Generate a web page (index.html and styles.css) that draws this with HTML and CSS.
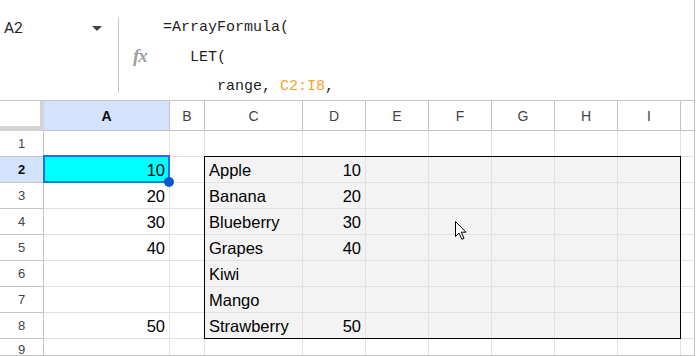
FILE: index.html
```html
<!DOCTYPE html>
<html lang="en">
<head>
  <meta charset="UTF-8">
  <title>Sheet</title>
  <link rel="stylesheet" href="styles.css">
</head>
<body>

<div class="app">
  <!-- formula bar -->
  <div class="fbar">
    <div class="namebox"><span>A2</span><span class="caret"></span></div>
    <div class="divider"></div>
    <div class="fx">fx</div>
<pre class="formula">=ArrayFormula(
   LET(
      range, <span class="ref">C2:I8</span>,</pre>
  </div>

  <!-- grid -->
  <div class="sheet">
    <div class="corner"></div>
    <div class="hd sel">A</div><div class="hd">B</div><div class="hd">C</div><div class="hd">D</div><div class="hd">E</div><div class="hd">F</div><div class="hd">G</div><div class="hd">H</div><div class="hd">I</div><div class="hd last"></div>

    <div class="rh">1</div>
    <div class="c"></div><div class="c"></div><div class="c"></div><div class="c"></div><div class="c"></div><div class="c"></div><div class="c"></div><div class="c"></div><div class="c"></div><div class="c last"></div>

    <div class="rh sel">2</div>
    <div class="c num cyan">10</div><div class="c"></div><div class="c g">Apple</div><div class="c g num">10</div><div class="c g"></div><div class="c g"></div><div class="c g"></div><div class="c g"></div><div class="c g"></div><div class="c last"></div>

    <div class="rh">3</div>
    <div class="c num">20</div><div class="c"></div><div class="c g">Banana</div><div class="c g num">20</div><div class="c g"></div><div class="c g"></div><div class="c g"></div><div class="c g"></div><div class="c g"></div><div class="c last"></div>

    <div class="rh">4</div>
    <div class="c num">30</div><div class="c"></div><div class="c g">Blueberry</div><div class="c g num">30</div><div class="c g"></div><div class="c g"></div><div class="c g"></div><div class="c g"></div><div class="c g"></div><div class="c last"></div>

    <div class="rh">5</div>
    <div class="c num">40</div><div class="c"></div><div class="c g">Grapes</div><div class="c g num">40</div><div class="c g"></div><div class="c g"></div><div class="c g"></div><div class="c g"></div><div class="c g"></div><div class="c last"></div>

    <div class="rh">6</div>
    <div class="c"></div><div class="c"></div><div class="c g">Kiwi</div><div class="c g"></div><div class="c g"></div><div class="c g"></div><div class="c g"></div><div class="c g"></div><div class="c g"></div><div class="c last"></div>

    <div class="rh">7</div>
    <div class="c"></div><div class="c"></div><div class="c g">Mango</div><div class="c g"></div><div class="c g"></div><div class="c g"></div><div class="c g"></div><div class="c g"></div><div class="c g"></div><div class="c last"></div>

    <div class="rh">8</div>
    <div class="c num">50</div><div class="c"></div><div class="c g">Strawberry</div><div class="c g num">50</div><div class="c g"></div><div class="c g"></div><div class="c g"></div><div class="c g"></div><div class="c g"></div><div class="c last"></div>

    <div class="rh r9">9</div>
    <div class="c"></div><div class="c"></div><div class="c"></div><div class="c"></div><div class="c"></div><div class="c"></div><div class="c"></div><div class="c"></div><div class="c"></div><div class="c last"></div>

    <!-- overlays -->
    <div class="range-box"></div>
    <div class="sel-box"></div>
    <div class="handle"></div>
    <svg class="cursor" width="13" height="20" viewBox="0 0 13 20">
      <path d="M0.5 0.5 L0.5 15.5 L4 12 L6.8 18.3 L9 17.3 L6.3 11.2 L11 11.2 Z" fill="#fff" stroke="#000" stroke-width="1" stroke-linejoin="miter"/>
    </svg>
  </div>
</div>

</body>
</html>
```

FILE: styles.css
```css
body {
  margin: 0;
  padding: 0;
  background: #fff;
  font-family: 'Liberation Sans', Arial, sans-serif;
}

.app {
  width: 695px;
  height: 356px;
  box-sizing: border-box;
  border-right: 1px solid #c4c4c4;
  border-bottom: 1px solid #c4c4c4;
  overflow: hidden;
}

/* formula bar */
.fbar {
  display: flex;
  height: 101px;
  box-sizing: border-box;
  border-bottom: 1px solid #c4c4c4;
}

.namebox {
  width: 118px;
  box-sizing: border-box;
  padding: 18px 0 0 4px;
  display: flex;
  align-items: flex-start;
  font-family: Roboto, sans-serif;
  font-size: 15.5px;
  line-height: 20px;
  color: #1f1f1f;
}

.namebox span:first-child {
  flex: 1;
}

.caret {
  width: 0;
  height: 0;
  margin: 8px 16px 0 0;
  border-left: 5px solid transparent;
  border-right: 5px solid transparent;
  border-top: 5px solid #444;
}

.divider {
  width: 1px;
  height: 75px;
  margin-top: 18px;
  background: #c7c7c7;
}

.fx {
  width: 44px;
  box-sizing: border-box;
  padding: 46px 0 0 14px;
  font-family: 'Liberation Serif', serif;
  font-style: italic;
  font-weight: bold;
  font-size: 19px;
  line-height: 20px;
  color: #a0a0a0;
  letter-spacing: -1px;
}

.formula {
  margin: 0;
  padding-top: 13px;
  font-family: 'Liberation Mono', monospace;
  font-size: 15px;
  line-height: 29.5px;
  color: #1f1f1f;
}

.ref {
  color: #f6a135;
}

/* grid */
.sheet {
  position: relative;
  display: grid;
  grid-template-columns: 44px 126px 35px 98px repeat(6, 63px) 13px;
  grid-template-rows: 30px repeat(8, 26px) 26px;
}

.corner {
  box-sizing: border-box;
  background: #fff;
  border-right: 4px solid #d4d4d4;
  border-bottom: 5px solid #d4d4d4;
}

.hd {
  box-sizing: border-box;
  border-right: 1px solid #c4c4c4;
  border-bottom: 1px solid #c4c4c4;
  display: flex;
  align-items: center;
  justify-content: center;
  font-size: 14px;
  color: #444;
}

.rh {
  box-sizing: border-box;
  border-right: 1px solid #c4c4c4;
  border-bottom: 1px solid #c4c4c4;
  display: flex;
  align-items: center;
  justify-content: center;
  font-size: 13px;
  color: #444;
}

.rh.r9 {
  align-items: flex-start;
  padding-top: 3px;
}

.hd.sel, .rh.sel {
  background: #d3e3fd;
  color: #0b0b0b;
  font-weight: bold;
}

.c {
  box-sizing: border-box;
  border-right: 1px solid #e1e1e1;
  border-bottom: 1px solid #e1e1e1;
  padding: 1px 4px 0;
  font-size: 16.5px;
  line-height: 24px;
  color: #000;
  white-space: nowrap;
  overflow: hidden;
}

.c.last, .hd.last {
  border-right: none;
}

.num {
  text-align: right;
}

.g {
  background: #f3f3f3;
}

.cyan {
  background: #00ffff;
}

/* overlays */
.range-box {
  position: absolute;
  left: 204px;
  top: 55px;
  width: 477px;
  height: 183px;
  box-sizing: border-box;
  border: 1px solid #000;
}

.sel-box {
  position: absolute;
  left: 43px;
  top: 54px;
  width: 127px;
  height: 28px;
  box-sizing: border-box;
  border: 2px solid #1a73e8;
}

.handle {
  position: absolute;
  left: 164px;
  top: 76px;
  width: 10px;
  height: 10px;
  border-radius: 50%;
  background: #0b57d0;
}

.cursor {
  position: absolute;
  left: 455px;
  top: 120px;
}
```
